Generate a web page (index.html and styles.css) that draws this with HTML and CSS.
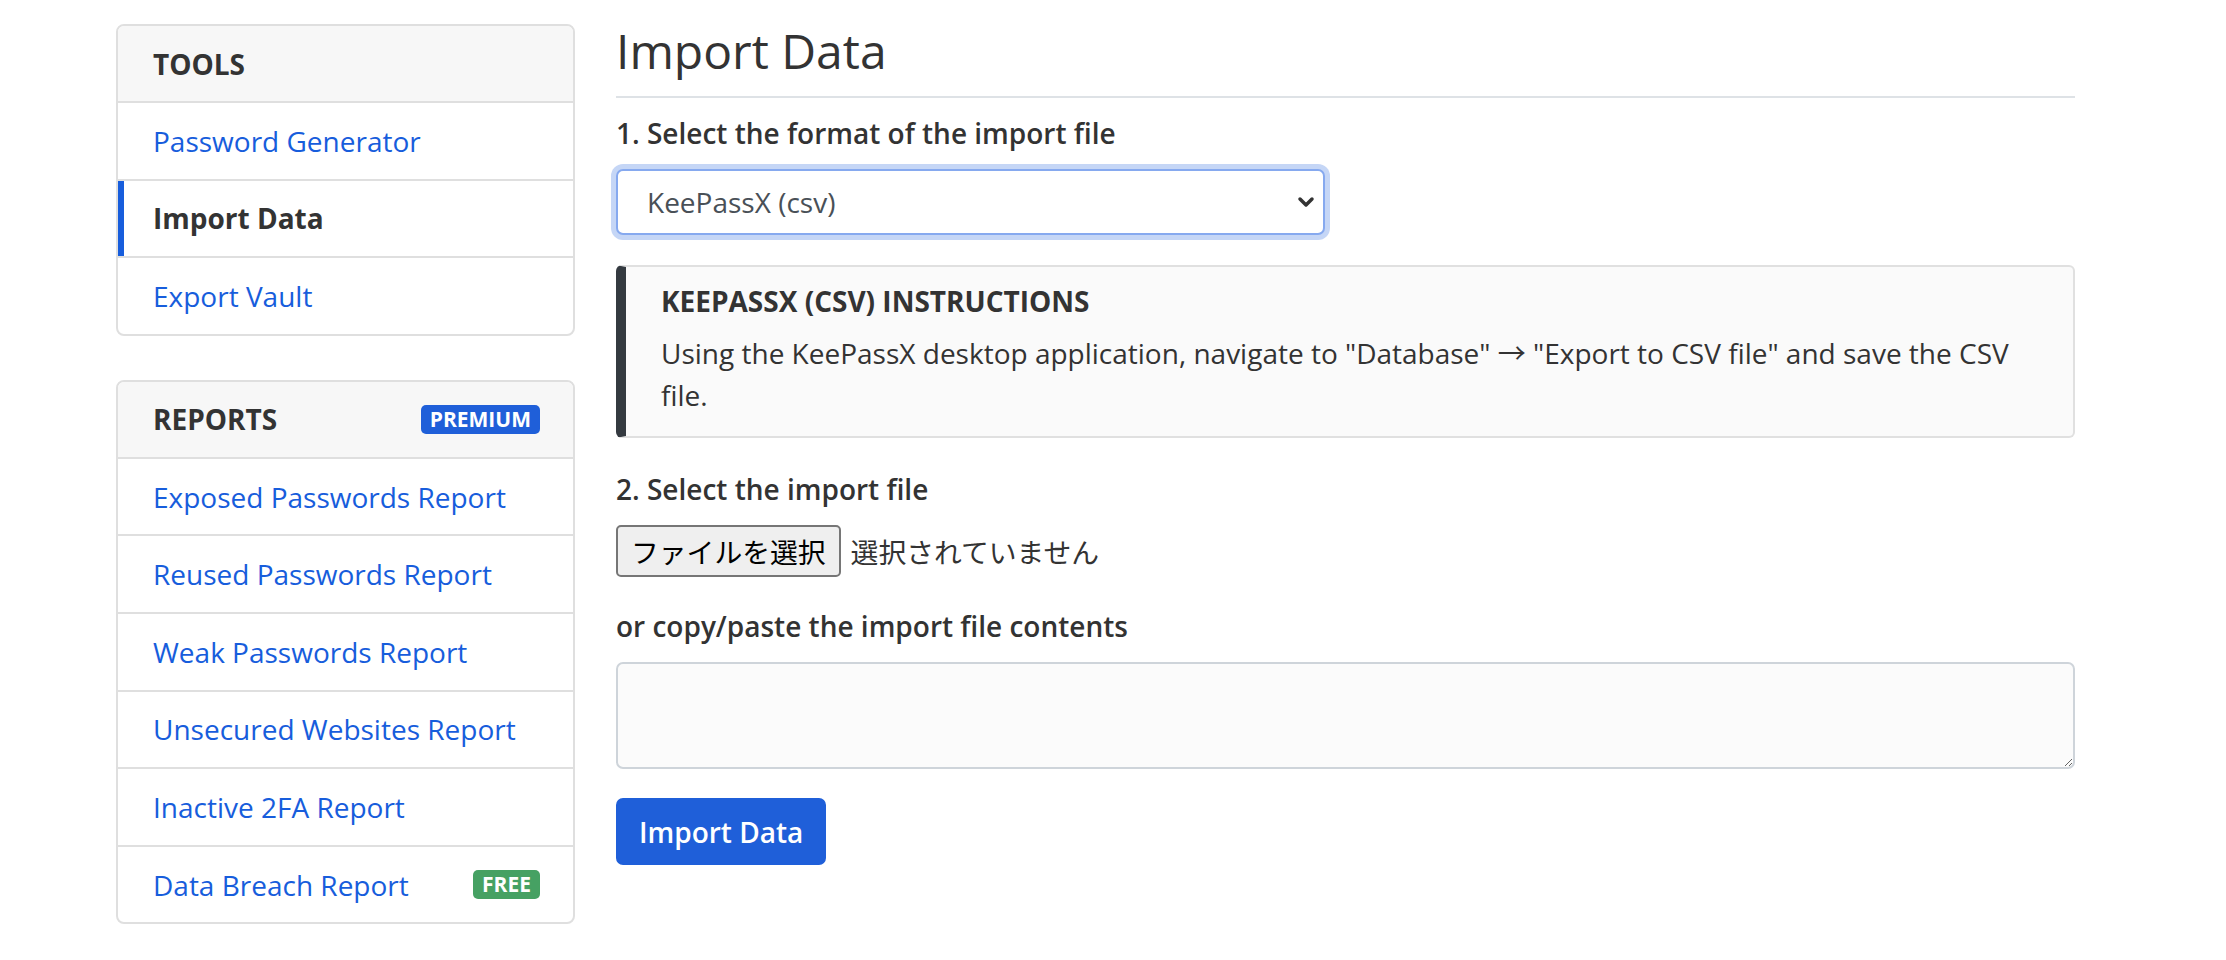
FILE: index.html
```html
<!DOCTYPE html>
<html lang="en">
<head>
<meta charset="utf-8">
<title>Import Data</title>
<link rel="stylesheet" href="styles.css">
</head>
<body>
<div class="page">
  <aside class="sidebar">
    <div class="card">
      <div class="card-header"><span>TOOLS</span></div>
      <nav class="list">
        <a class="item" href="#">Password Generator</a>
        <a class="item active" href="#">Import Data</a>
        <a class="item" href="#">Export Vault</a>
      </nav>
    </div>
    <div class="card">
      <div class="card-header"><span>REPORTS</span><span class="badge badge-primary">PREMIUM</span></div>
      <nav class="list">
        <a class="item" href="#">Exposed Passwords Report</a>
        <a class="item" href="#">Reused Passwords Report</a>
        <a class="item" href="#">Weak Passwords Report</a>
        <a class="item" href="#">Unsecured Websites Report</a>
        <a class="item" href="#">Inactive 2FA Report</a>
        <a class="item" href="#"><span>Data Breach Report</span><span class="badge badge-success">FREE</span></a>
      </nav>
    </div>
  </aside>
  <main class="main">
    <div class="page-header"><h1 class="title">Import Data</h1></div>
    <div class="group group-select">
      <label class="label">1. Select the format of the import file</label>
      <div class="select">
        <span>KeePassX (csv)</span>
        <svg class="chevron" width="18" height="12" viewBox="0 0 18 12"><polyline points="3,3 9,9 15,3" fill="none" stroke="#333" stroke-width="3.5" stroke-linecap="round" stroke-linejoin="round"/></svg>
      </div>
    </div>
    <div class="callout">
      <h3 class="callout-title">KEEPASSX (CSV) INSTRUCTIONS</h3>
      <p class="callout-text">Using the KeePassX desktop application, navigate to "Database" → "Export to CSV file" and save the CSV file.</p>
    </div>
    <div class="group group-file">
      <label class="label">2. Select the import file</label>
      <div class="file">
        <span class="file-btn">ファイルを選択</span>
        <span class="file-name">選択されていません</span>
      </div>
    </div>
    <div class="group group-text">
      <label class="label">or copy/paste the import file contents</label>
      <textarea class="textarea"></textarea>
    </div>
    <button class="btn" type="button">Import Data</button>
  </main>
</div>
</body>
</html>
```

FILE: styles.css
```css
* {
  box-sizing: border-box;
}

html,
body {
  margin: 0;
  padding: 0;
}

body {
  font-family: "Open Sans", "Noto Sans CJK JP", sans-serif;
  font-size: 28px;
  line-height: 42px;
  color: #333;
  background: #fff;
}

.page {
  display: flex;
  align-items: flex-start;
  gap: 41px;
  padding: 22px 0 0 116px;
}

/* Sidebar */
.sidebar {
  width: 459px;
  flex: none;
  margin-top: 2px;
  display: flex;
  flex-direction: column;
  gap: 44px;
}

.card {
  border: 2px solid #dfdfdf;
  border-radius: 8px;
  overflow: hidden;
  background: #fff;
}

.card-header {
  display: flex;
  justify-content: space-between;
  align-items: center;
  background: #f7f7f7;
  border-bottom: 2px solid #dfdfdf;
  padding: 16.5px 33px 16.5px 35px;
  font-weight: 700;
  color: #333;
}

.list {
  display: flex;
  flex-direction: column;
}

.item {
  display: flex;
  justify-content: space-between;
  align-items: center;
  padding: 16.8px 33px 16.8px 35px;
  color: #175ddc;
  text-decoration: none;
  border-bottom: 2px solid #dfdfdf;
}

.item:last-child {
  border-bottom: 0;
}

.item.active {
  color: #333;
  font-weight: 700;
  box-shadow: inset 6px 0 0 #175ddc;
}

.badge {
  display: inline-block;
  font-size: 21px;
  line-height: 21px;
  font-weight: 700;
  color: #fff;
  padding: 4px 9px;
  border-radius: 5px;
}

.badge-primary {
  background: #1f5fd9;
}

.badge-success {
  background: #46a163;
}

/* Main */
.main {
  width: 1459px;
  flex: none;
}

.page-header {
  padding-bottom: 15px;
  border-bottom: 2px solid #dee2e6;
  margin-bottom: 14px;
}

.title {
  margin: 0;
  font-size: 48px;
  line-height: 58.8px;
  font-weight: 400;
  color: #333;
}

.label {
  display: block;
  font-weight: 600;
  margin-bottom: 15px;
}

.group-select {
  margin-bottom: 30px;
}

.group-file {
  margin-bottom: 28px;
}

.group-text {
  margin-bottom: 29px;
}

.select {
  width: 709px;
  height: 66px;
  display: flex;
  align-items: center;
  justify-content: space-between;
  padding: 0 8px 0 29px;
  background: #fff;
  color: #495057;
  border: 2px solid #86a9ef;
  border-radius: 7px;
  box-shadow: 0 0 0 5px rgba(23, 93, 220, 0.25);
}

.chevron {
  display: block;
}

.callout {
  background: #fafafa;
  border: 2px solid #e0e0e0;
  border-left: 10px solid #343a40;
  border-radius: 6px;
  padding: 18px 35px 20px 35px;
  margin-bottom: 30px;
}

.callout-title {
  margin: 0 0 14px;
  font-size: 28px;
  line-height: 33.6px;
  font-weight: 700;
  color: #333;
}

.callout-text {
  margin: 0;
}

.file {
  display: flex;
  align-items: center;
  gap: 10px;
  font-family: "Noto Sans CJK JP", sans-serif;
  font-size: 27.8px;
}

.file-btn {
  display: inline-block;
  background: #efefef;
  border: 2px solid #767676;
  border-radius: 5px;
  padding: 3px 13px;
  line-height: 42px;
  color: #000;
}

.file-name {
  color: #333;
}

.textarea {
  display: block;
  width: 100%;
  height: 107px;
  background: #fbfbfb;
  border: 2px solid #ced4da;
  border-radius: 7px;
  padding: 10px 21px;
  font: inherit;
  color: #495057;
}

.btn {
  display: inline-block;
  background: #1f5fd9;
  color: #fff;
  border: 2px solid #1f5fd9;
  border-radius: 7px;
  font-family: "Open Sans", sans-serif;
  font-size: 28px;
  line-height: 42px;
  font-weight: 600;
  padding: 10.5px 21px;
  cursor: pointer;
}
```
